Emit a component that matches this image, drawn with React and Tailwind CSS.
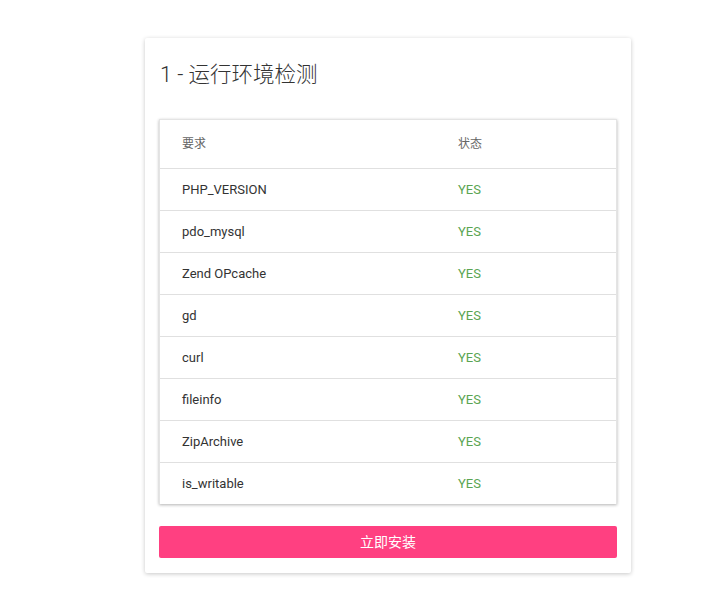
import React from 'react';

const rows = ['PHP_VERSION', 'pdo_mysql', 'Zend OPcache', 'gd', 'curl', 'fileinfo', 'ZipArchive', 'is_writable'];

const App = () => {
    return (
        <div className="min-h-screen bg-white font-['Roboto','Noto_Sans_CJK_SC',sans-serif] pt-[38px] pl-[145px]">
            <div className="w-[486px] bg-white shadow-[0_1px_4px_rgba(0,0,0,0.22)] rounded-[2px] px-[14px] pt-[22px] pb-[15px]">
                <h1 className="h-[30px] leading-[30px] text-[21.5px] font-light text-[#333] pl-[1px] mb-[29px]">1 - 运行环境检测</h1>

                <div className="shadow-[0_1px_3px_rgba(0,0,0,0.3)] border border-[#e4e4e4] border-b-0">
                    <div className="flex h-[48px] items-center text-[12px] text-[#666]">
                        <div className="w-[298px] pl-[22px]">要求</div>
                        <div>状态</div>
                    </div>
                    {rows.map((r) => (
                        <div key={r} className="flex h-[42px] items-center border-t border-[#e0e0e0] text-[13px]">
                            <div className="w-[298px] pl-[22px] text-[#333]">{r}</div>
                            <div className="text-[#5aa552]">YES</div>
                        </div>
                    ))}
                </div>

                <button className="mt-[22px] w-full h-[32px] bg-[#ff4081] text-white text-[14px] rounded-[2px]">立即安装</button>
            </div>
        </div>
    );
};

export default App;
